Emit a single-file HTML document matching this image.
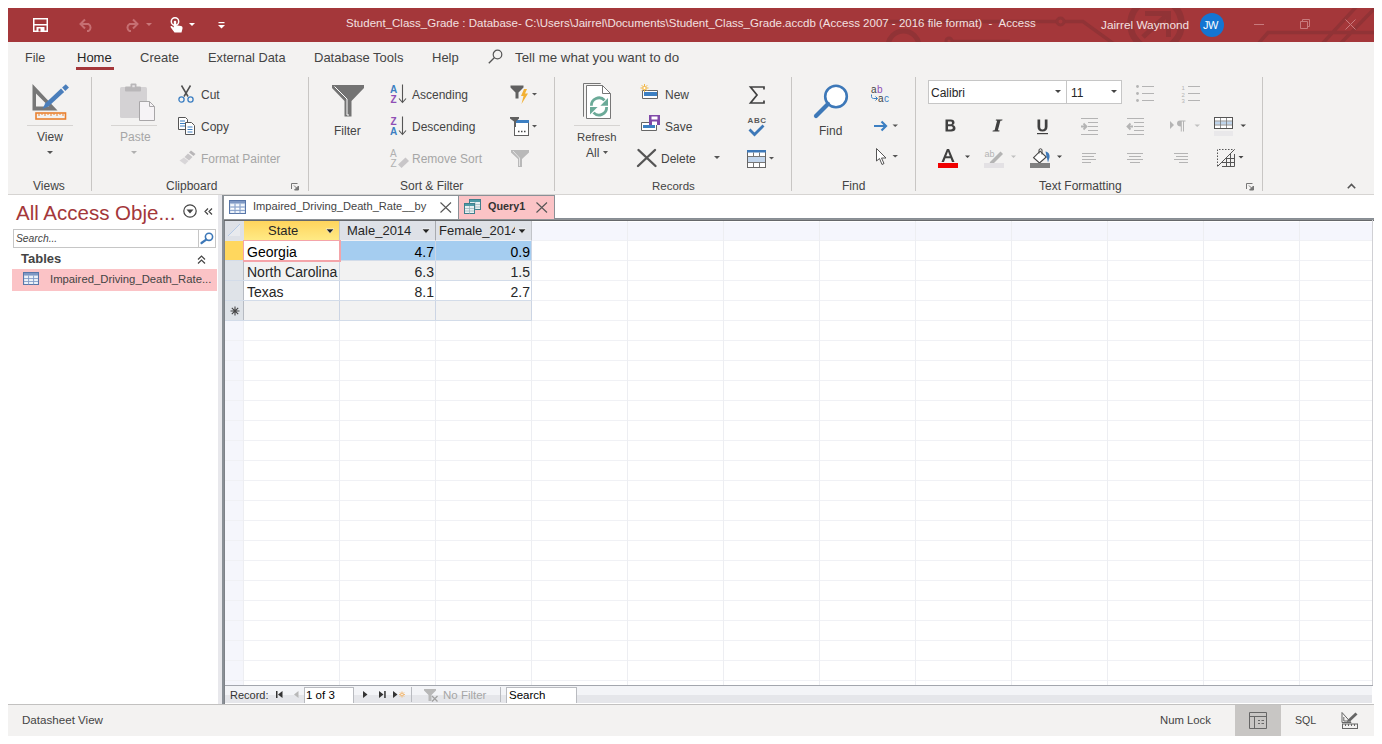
<!DOCTYPE html>
<html><head><meta charset="utf-8">
<style>
html,body{margin:0;padding:0;}
body{width:1382px;height:744px;background:#fff;position:relative;overflow:hidden;font-family:"Liberation Sans",sans-serif;color:#444;}
.a{position:absolute;white-space:nowrap;line-height:1;}
.t{position:absolute;white-space:nowrap;line-height:1;font-size:12px;color:#444;}
svg{position:absolute;overflow:visible;}
#title{left:8px;top:8px;width:1366px;height:34px;background:#A4373A;}
#tabs{left:8px;top:42px;width:1366px;height:30px;background:#F3F2F1;}
#ribbon{left:8px;top:72px;width:1366px;height:122px;background:#F3F2F1;border-bottom:1px solid #D6D4D2;}
.sep{position:absolute;width:1px;background:#C8C6C4;top:77px;height:114px;}
.gl{position:absolute;top:180px;font-size:12px;color:#444;white-space:nowrap;line-height:1;}
#nav{left:8px;top:195px;width:210px;height:509px;background:#fff;}
#split{left:218px;top:195px;width:4px;height:509px;background:#E8E8EC;}
#status{left:8px;top:704px;width:1366px;height:32px;background:#F3F2F1;border-top:1px solid #C2C1C0;box-sizing:border-box;}
.dis{color:#A6A6A6;}
</style></head>
<body>
<!-- TITLE BAR -->
<div id="title" class="a"></div>
<svg style="left:8px;top:8px;overflow:hidden" width="1366" height="34" viewBox="8 8 1366 34">
 <g fill="none" stroke="#913336" stroke-width="3.5">
  <path d="M884 21.5H1057M1064 21.5H1083L1114 44"/>
  <circle cx="1060.5" cy="21.5" r="3.5" stroke-width="3"/>
  <circle cx="903.5" cy="46.5" r="15.5" stroke-width="5"/>
  <path d="M952 41.5H1010"/>
  <circle cx="949" cy="41" r="3" stroke-width="3"/>
  <circle cx="1156" cy="24" r="25.5" stroke-width="6.5"/>
  <path d="M1143 37L1168 14M1145 13.5H1168.5V37" stroke-width="5"/>
  <path d="M1258 44L1268 32.5H1374M1322 44L1357 6M1340 44L1376 7"/>
 </g>
</svg>
<div class="t" style="left:346px;top:18px;font-size:11.5px;color:#F3E0E0;">Student_Class_Grade : Database- C:\Users\Jairrel\Documents\Student_Class_Grade.accdb (Access 2007 - 2016 file format)&nbsp; - &nbsp;Access</div>
<div class="t" style="left:1101px;top:20px;font-size:11.8px;color:#F3E0E0;">Jairrel Waymond</div>
<div class="a" style="left:1200px;top:13px;width:24px;height:24px;border-radius:50%;background:#1475D2;"></div>
<div class="t" style="left:1203px;top:20px;font-size:11px;color:#fff;letter-spacing:-0.5px;">JW</div>

<!-- TABS ROW -->
<div id="tabs" class="a"></div>
<div class="t" style="left:25px;top:52px;font-size:12.5px;">File</div>
<div class="t" style="left:77px;top:51px;font-size:13px;color:#262626;">Home</div>
<div class="a" style="left:76px;top:67px;width:38px;height:3px;background:#A4373A;"></div>
<div class="t" style="left:140px;top:51px;font-size:13px;">Create</div>
<div class="t" style="left:208px;top:51.5px;font-size:12.8px;">External Data</div>
<div class="t" style="left:314px;top:51px;font-size:13px;">Database Tools</div>
<div class="t" style="left:432px;top:51px;font-size:13px;">Help</div>
<div class="t" style="left:515px;top:51px;font-size:13.3px;">Tell me what you want to do</div>

<!-- RIBBON -->
<div id="ribbon" class="a"></div>
<div class="sep" style="left:91px"></div>
<div class="sep" style="left:308px"></div>
<div class="sep" style="left:554px"></div>
<div class="sep" style="left:791px"></div>
<div class="sep" style="left:915px"></div>
<div class="sep" style="left:1262px"></div>

<div class="t" style="left:37px;top:131px;">View</div>
<div class="gl" style="left:33px;">Views</div>
<div class="t dis" style="left:120px;top:131px;">Paste</div>
<div class="t" style="left:201px;top:89px;">Cut</div>
<div class="t" style="left:201px;top:121px;">Copy</div>
<div class="t dis" style="left:201px;top:153px;">Format Painter</div>
<div class="gl" style="left:166px;">Clipboard</div>
<div class="t" style="left:334px;top:125px;">Filter</div>
<div class="t" style="left:412px;top:89px;">Ascending</div>
<div class="t" style="left:412px;top:121px;">Descending</div>
<div class="t dis" style="left:412px;top:153px;">Remove Sort</div>
<div class="gl" style="left:400px;">Sort &amp; Filter</div>
<div class="t" style="left:577px;top:131.5px;font-size:11.3px;">Refresh</div>
<div class="t" style="left:586px;top:147px;">All</div>
<div class="t" style="left:665px;top:89px;">New</div>
<div class="t" style="left:665px;top:121px;">Save</div>
<div class="t" style="left:661px;top:153px;">Delete</div>
<div class="gl" style="left:652px;font-size:11.5px;top:180.5px;">Records</div>
<div class="t" style="left:819px;top:125px;">Find</div>
<div class="gl" style="left:842px;">Find</div>
<div class="gl" style="left:1039px;">Text Formatting</div>

<!-- font combos -->
<div class="a" style="left:928px;top:80px;width:139px;height:24px;background:#fff;border:1px solid #C6C6C6;box-sizing:border-box;"></div>
<div class="a" style="left:1066px;top:80px;width:56px;height:24px;background:#fff;border:1px solid #C6C6C6;box-sizing:border-box;"></div>
<div class="t" style="left:931px;top:87px;color:#262626;">Calibri</div>
<div class="t" style="left:1071px;top:87px;color:#262626;">11</div>


<!-- TITLE ICONS -->
<svg style="left:33px;top:18px" width="15" height="14" viewBox="0 0 15 14">
 <path d="M0.75 0.75H14.25V13.25H0.75Z" fill="none" stroke="#fff" stroke-width="1.5"/>
 <rect x="1" y="6" width="13" height="1.5" fill="#fff"/>
 <rect x="3.5" y="9" width="8" height="4.5" fill="#fff"/>
 <rect x="5.5" y="10.5" width="2" height="3" fill="#A4373A"/>
</svg>
<svg style="left:79px;top:18px" width="16" height="14" viewBox="0 0 16 14">
 <path d="M2 6H9.5A4 4 0 0 1 9.5 13H8" fill="none" stroke="#C66F72" stroke-width="2"/>
 <path d="M6 1.5L1.5 6L6 10.5" fill="none" stroke="#C66F72" stroke-width="2"/>
</svg>
<svg style="left:123px;top:18px" width="16" height="14" viewBox="0 0 16 14">
 <path d="M14 6H6.5A4 4 0 0 0 6.5 13H8" fill="none" stroke="#C66F72" stroke-width="2"/>
 <path d="M10 1.5L14.5 6L10 10.5" fill="none" stroke="#C66F72" stroke-width="2"/>
</svg>
<svg style="left:146px;top:23px" width="6" height="3" viewBox="0 0 6 3"><path d="M0 0H6L3 3Z" fill="#C9787A"/></svg>
<svg style="left:170px;top:17px" width="13" height="16" viewBox="0 0 13 16">
 <circle cx="5" cy="4.5" r="3.7" fill="none" stroke="#fff" stroke-width="1.5"/>
 <path d="M3.8 4.5V10.5L2 9.2C1 8.6 0 9.4 0.8 10.4L4.5 15.5H11.5L12.5 11.5C12.8 10 12 9.2 11 9L6.2 8.2V4.5C6.2 3.5 3.8 3.5 3.8 4.5Z" fill="#fff"/>
</svg>
<svg style="left:189px;top:23px" width="6" height="3" viewBox="0 0 6 3"><path d="M0 0H6L3 3Z" fill="#fff"/></svg>
<svg style="left:218px;top:22px" width="7" height="7" viewBox="0 0 7 7"><rect x="0.5" y="0" width="6" height="1.2" fill="#fff"/><path d="M0 3H7L3.5 6.5Z" fill="#fff"/></svg>
<!-- window controls -->
<svg style="left:1254px;top:24px" width="10" height="1" viewBox="0 0 10 1"><rect width="10" height="1" fill="#C87A7D"/></svg>
<svg style="left:1300px;top:19px" width="10" height="10" viewBox="0 0 10 10"><path d="M0.5 2.5H7.5V9.5H0.5Z M2.5 2.5V0.5H9.5V7.5H7.5" fill="none" stroke="#C87A7D" stroke-width="1"/></svg>
<svg style="left:1345px;top:19px" width="11" height="11" viewBox="0 0 11 11"><path d="M0.5 0.5L10.5 10.5M10.5 0.5L0.5 10.5" stroke="#C87A7D" stroke-width="1"/></svg>
<!-- tell me magnifier -->
<svg style="left:488px;top:49px" width="15" height="15" viewBox="0 0 15 15"><circle cx="9.5" cy="5.5" r="4.3" fill="none" stroke="#555" stroke-width="1.2"/><path d="M6.5 8.5L0.8 14.2" stroke="#555" stroke-width="1.3"/></svg>

<!-- VIEW -->
<svg style="left:32px;top:82px" width="36" height="38" viewBox="0 0 36 38">
 <path d="M0.5 2V28.5H25.5Z M4 11.5V24.5H17Z" fill="#777" fill-rule="evenodd"/>
 <g transform="translate(10.5 27) rotate(-43)" fill="#4A7EBB"><path d="M0 0L6 -2.3H27.5V2.3H6Z"/><path d="M29 -2.3H34V2.3H29Z"/></g>
 <rect x="4" y="31" width="29.5" height="6" fill="none" stroke="#E9802F" stroke-width="1.6"/>
 <path d="M7 31.5V34M10 31.5V33M13 31.5V34M16 31.5V33M19 31.5V34M22 31.5V33M25 31.5V34M28 31.5V33M31 31.5V34" stroke="#E9802F" stroke-width="1"/>
</svg>
<div class="a" style="left:27px;top:125px;width:46px;height:1px;background:#D6D4D2;"></div>
<svg style="left:47px;top:151px" width="6" height="3" viewBox="0 0 6 3"><path d="M0 0H6L3 3Z" fill="#555"/></svg>
<!-- PASTE -->
<svg style="left:120px;top:83px" width="36" height="39" viewBox="0 0 36 39">
 <rect x="0" y="4" width="27" height="31" rx="1.5" fill="#D4D2D4"/>
 <rect x="5" y="3.5" width="16" height="5" rx="1" fill="#B9B7B9"/>
 <rect x="10.5" y="0.5" width="6" height="5" rx="1" fill="#B9B7B9"/>
 <rect x="12.3" y="2.2" width="2.5" height="2" fill="#E6E4E6"/>
 <path d="M19.5 18.5H29.5L34.5 23.5V37.5H19.5Z" fill="#F6F3F6" stroke="#A8A6A8" stroke-width="1"/>
 <path d="M29.5 18.5V23.5H34.5" fill="none" stroke="#A8A6A8" stroke-width="1"/>
</svg>
<div class="a" style="left:111px;top:125px;width:46px;height:1px;background:#D6D4D2;"></div>
<svg style="left:131px;top:151px" width="6" height="3" viewBox="0 0 6 3"><path d="M0 0H6L3 3Z" fill="#B0B0B0"/></svg>
<!-- CUT -->
<svg style="left:178px;top:85px" width="16" height="18" viewBox="0 0 16 18">
 <path d="M3.5 0.5L10 11.5M12.5 0.5L6 11.5" stroke="#505050" stroke-width="1.5"/>
 <circle cx="3.5" cy="14.5" r="2.6" fill="none" stroke="#3C7FC2" stroke-width="1.3"/>
 <circle cx="12.5" cy="14.5" r="2.6" fill="none" stroke="#3C7FC2" stroke-width="1.3"/>
</svg>
<!-- COPY -->
<svg style="left:178px;top:117px" width="17" height="18" viewBox="0 0 17 18">
 <path d="M0.5 0.5H7.5L9.5 2.5V12.5H0.5Z" fill="#fff" stroke="#555" stroke-width="1"/>
 <path d="M2 4H7M2 6.5H7M2 9H7" stroke="#3C7FC2" stroke-width="1"/>
 <path d="M7.5 5.5H13.5L16.5 8.5V17.5H7.5Z" fill="#fff" stroke="#555" stroke-width="1"/>
 <path d="M9.5 10H14.5M9.5 12.5H14.5M9.5 15H14.5" stroke="#3C7FC2" stroke-width="1"/>
</svg>
<!-- FORMAT PAINTER -->
<svg style="left:179px;top:150px" width="17" height="15" viewBox="0 0 17 15">
 <path d="M12 0.5L16.5 4L14.5 6L10 2.5Z" fill="#B8B6B8"/>
 <path d="M9 3.5L13.5 7L10 10.5L5.5 7Z" fill="#C8C6C8"/>
 <path d="M5 7.5L9.5 11L6 14.5L0.5 10.5Z" fill="#D8D6D8"/>
</svg>
<svg style="left:291px;top:183px" width="8" height="7" viewBox="0 0 8 7"><path d="M0.5 6V0.5H6.5" fill="none" stroke="#777" stroke-width="1"/><path d="M3 2.5L7 6.5M7.5 3V7H3.5Z" stroke="#777" fill="#777" stroke-width="1"/></svg>

<!-- FILTER -->
<svg style="left:332px;top:85px" width="33" height="32" viewBox="0 0 33 32">
 <path d="M0 0H32V3L19.5 16V31.5H12.5V16L0 3Z" fill="#737373"/>
 <path d="M2.5 1.5L15 14V30H17" fill="none" stroke="#fff" stroke-width="1"/>
</svg>
<!-- sort icons -->
<svg style="left:390px;top:84px" width="18" height="20" viewBox="0 0 18 20">
 <text x="0" y="9" font-family="Liberation Sans" font-size="10" font-weight="bold" fill="#3C7FC2">A</text>
 <text x="0.5" y="19" font-family="Liberation Sans" font-size="10" font-weight="bold" fill="#8F4FB5">Z</text>
 <path d="M12.5 0.5V18M9 14.5L12.5 18.5L16 14.5" fill="none" stroke="#555" stroke-width="1.1"/>
</svg>
<svg style="left:390px;top:116px" width="18" height="20" viewBox="0 0 18 20">
 <text x="0.5" y="9" font-family="Liberation Sans" font-size="10" font-weight="bold" fill="#8F4FB5">Z</text>
 <text x="0" y="19" font-family="Liberation Sans" font-size="10" font-weight="bold" fill="#3C7FC2">A</text>
 <path d="M12.5 0.5V18M9 14.5L12.5 18.5L16 14.5" fill="none" stroke="#555" stroke-width="1.1"/>
</svg>
<svg style="left:390px;top:148px" width="20" height="20" viewBox="0 0 20 20">
 <text x="0" y="9" font-family="Liberation Sans" font-size="10" fill="#B0B0B0">A</text>
 <text x="0.5" y="19" font-family="Liberation Sans" font-size="10" fill="#B0B0B0">Z</text>
 <path d="M8 16.5L15.5 9.5L19 13L11.5 20Z" fill="#C8C6C8"/>
</svg>
<!-- filter lightning -->
<svg style="left:510px;top:85px" width="28" height="20" viewBox="0 0 28 20">
 <path d="M0.5 0.5H13.5V2.5L8.5 7.5V13.5H5.5V7.5L0.5 2.5Z" fill="#606060"/>
 <path d="M14 4H17L15 8.5H18L11.5 19L13.5 11H11Z" fill="#F2B134"/>
 <path d="M22 8H27L24.5 10.5Z" fill="#555"/>
</svg>
<svg style="left:510px;top:117px" width="28" height="19" viewBox="0 0 28 19">
 <rect x="4.5" y="3.5" width="14" height="15" fill="#fff" stroke="#606060" stroke-width="1"/>
 <rect x="5" y="3" width="14" height="3" fill="#3C7FC2"/>
 <path d="M0 0H9V1.5L6 4.5V10H4V4.5L0 1.5Z" fill="#606060"/>
 <path d="M8 14.5H9.5M11 14.5H12.5M14 14.5H15.5" stroke="#444" stroke-width="1.3"/>
 <path d="M22 8H27L24.5 10.5Z" fill="#555"/>
</svg>
<svg style="left:511px;top:150px" width="19" height="17" viewBox="0 0 19 17">
 <path d="M0 0H18V2.5L11 9V17H7V9L0 2.5Z" fill="#B9B9B9"/>
 <path d="M2 1L8.5 8V16" fill="none" stroke="#E8E8E8" stroke-width="0.9"/>
</svg>

<!-- REFRESH -->
<svg style="left:582px;top:83px" width="30" height="37" viewBox="0 0 30 37">
 <path d="M1.5 33.7V0.5H18.7" fill="none" stroke="#777" stroke-width="1"/>
 <path d="M4.5 2.5H20.5L28.5 10.5V35.5H4.5Z" fill="#fff" stroke="#777" stroke-width="1"/>
 <path d="M20.5 2.5V10.5H28.5" fill="none" stroke="#777" stroke-width="1"/>
 <path d="M9.4 22.8A7.6 7.6 0 0 1 22.5 17.2" fill="none" stroke="#6BAA98" stroke-width="2.8"/>
 <path d="M26 14.9V22.8H18.4Z" fill="#6BAA98"/>
 <path d="M24.6 24A7.6 7.6 0 0 1 11.5 29.6" fill="none" stroke="#6BAA98" stroke-width="2.8"/>
 <path d="M8 24H15.6L8 31.4Z" fill="#6BAA98"/>
</svg>
<div class="a" style="left:574px;top:125px;width:46px;height:1px;background:#D6D4D2;"></div>
<svg style="left:603px;top:151px" width="5" height="3" viewBox="0 0 5 3"><path d="M0 0H5L2.5 3Z" fill="#555"/></svg>
<!-- New/Save/Delete -->
<svg style="left:640px;top:84px" width="19" height="16" viewBox="0 0 19 16">
 <path d="M2.5 6.5H17.5V14.5H2.5Z" fill="#fff" stroke="#666" stroke-width="1"/>
 <rect x="4" y="8" width="13" height="4" fill="#3C7FC2"/>
 <path d="M4.5 0V8M0.5 4H8.5M1.7 1.2L7.3 6.8M7.3 1.2L1.7 6.8" stroke="#F2B134" stroke-width="0.9"/><circle cx="4.5" cy="4" r="1.6" fill="#fff" stroke="#F2B134" stroke-width="0.8"/>
</svg>
<svg style="left:641px;top:115px" width="20" height="16" viewBox="0 0 20 16">
 <path d="M0.5 7.5H15.5V15.5H0.5Z" fill="#fff" stroke="#666" stroke-width="1"/>
 <rect x="2" y="10" width="12" height="3" fill="#3C7FC2"/>
 <rect x="8" y="0" width="11" height="10" fill="#8049A8"/>
 <rect x="10.5" y="1.5" width="6" height="3" fill="#fff"/>
 <rect x="11" y="6.5" width="5" height="3.5" fill="#fff"/>
</svg>
<svg style="left:637px;top:149px" width="20" height="18" viewBox="0 0 20 18">
 <path d="M1.5 1L18.5 17M18 1L1 17" stroke="#555" stroke-width="2.4" stroke-linecap="round"/>
</svg>
<svg style="left:714px;top:156px" width="6" height="3" viewBox="0 0 6 3"><path d="M0 0H6L3 3Z" fill="#555"/></svg>
<!-- totals / spelling / more -->
<svg style="left:749px;top:86px" width="16" height="18" viewBox="0 0 16 18">
 <path d="M15 3.5V1H1.5L8 9L1.5 17H15V14.5" fill="none" stroke="#404040" stroke-width="1.7"/>
</svg>
<svg style="left:747px;top:116px" width="20" height="21" viewBox="0 0 20 21">
 <text x="0.5" y="7" font-family="Liberation Sans" font-size="8" font-weight="bold" fill="#5A5A5A" letter-spacing="0.6">ABC</text>
 <path d="M2.5 13.5L7.5 18.5L16.5 9.5" fill="none" stroke="#3D78B8" stroke-width="2.8"/>
</svg>
<svg style="left:747px;top:150px" width="28" height="18" viewBox="0 0 28 18">
 <rect x="0.5" y="0.5" width="18" height="17" fill="#fff" stroke="#666" stroke-width="1"/>
 <rect x="0" y="0" width="19" height="2.5" fill="#3D78B8"/>
 <rect x="1" y="7" width="17" height="5" fill="#C3D6EC"/>
 <path d="M1 6.5H18M1 12.5H18M6.5 2.5V6.5M12.5 2.5V6.5M6.5 12.5V17M12.5 12.5V17" stroke="#777" stroke-width="1"/>
 <path d="M22 7H27L24.5 9.5Z" fill="#555"/>
</svg>

<!-- FIND -->
<svg style="left:813px;top:83px" width="37" height="36" viewBox="0 0 37 36">
 <circle cx="23" cy="13.5" r="10.8" fill="#fff" stroke="#3D78B8" stroke-width="2.6"/>
 <path d="M15 21L3 33" stroke="#3D78B8" stroke-width="4.2" stroke-linecap="round"/>
</svg>
<svg style="left:870px;top:85px" width="23" height="19" viewBox="0 0 23 19">
 <text x="1" y="8" font-family="Liberation Sans" font-size="10" fill="#444">a</text>
 <text x="7" y="8" font-family="Liberation Sans" font-size="10" fill="#8F4FB5">b</text>
 <text x="8" y="17" font-family="Liberation Sans" font-size="10" fill="#444">a</text>
 <text x="14" y="17" font-family="Liberation Sans" font-size="10" fill="#3C7FC2">c</text>
 <path d="M1.5 9.5V11.5C1.5 12.8 2.5 13.5 3.5 13.5H7.5M5.5 11.5L7.5 13.5L5.5 15.5" fill="none" stroke="#3C7FC2" stroke-width="1"/>
</svg>
<svg style="left:873px;top:120px" width="26" height="12" viewBox="0 0 26 12">
 <path d="M1 6H13M8.5 1.5L13 6L8.5 10.5" fill="none" stroke="#3C7FC2" stroke-width="2.2"/>
 <path d="M19.5 4.5H25L22.2 7Z" fill="#555"/>
</svg>
<svg style="left:876px;top:148px" width="23" height="18" viewBox="0 0 23 18">
 <path d="M0.5 0.5V13L3.5 10.5L6 16.5L8 15.5L5.5 10H10Z" fill="#fff" stroke="#555" stroke-width="1"/>
 <path d="M16.5 7H22L19.2 9.5Z" fill="#555"/>
</svg>


<!-- TEXT FORMATTING ICONS -->
<svg style="left:1111px;top:90px" width="6" height="3" viewBox="0 0 6 3"><path d="M0 0H6L3 3Z" fill="#444"/></svg>
<svg style="left:1055px;top:90px" width="6" height="3" viewBox="0 0 6 3"><path d="M0 0H6L3 3Z" fill="#444"/></svg>
<svg style="left:1135px;top:84px" width="21" height="18" viewBox="0 0 21 18">
 <circle cx="2.5" cy="2.5" r="1.4" fill="#B4B4B4"/><circle cx="2.5" cy="9.5" r="1.4" fill="#B4B4B4"/><circle cx="2.5" cy="16.5" r="1.4" fill="#B4B4B4"/>
 <path d="M7 2.5H19M7 9.5H19M7 16.5H19" stroke="#B4B4B4" stroke-width="1"/>
</svg>
<svg style="left:1181px;top:84px" width="21" height="19" viewBox="0 0 21 19">
 <text x="0.5" y="6" font-family="Liberation Sans" font-size="6" fill="#B4B4B4">1</text>
 <text x="0.5" y="12.5" font-family="Liberation Sans" font-size="6" fill="#B4B4B4">2</text>
 <text x="0.5" y="19" font-family="Liberation Sans" font-size="6" fill="#B4B4B4">3</text>
 <path d="M7 2.5H19M7 9.5H19M7 16.5H19" stroke="#B4B4B4" stroke-width="1"/>
</svg>
<svg style="left:945px;top:119px" width="11" height="13" viewBox="0 0 11 13">
 <path d="M0.5 0.5H5.8C8.3 0.5 9.5 1.8 9.5 3.4C9.5 4.8 8.6 5.8 7.4 6.1C9.2 6.3 10.5 7.5 10.5 9.2C10.5 11.3 8.9 12.5 6.2 12.5H0.5Z M3 2.5V5.3H5.3C6.5 5.3 7 4.7 7 3.9C7 3 6.4 2.5 5.3 2.5Z M3 7.2V10.5H5.7C7.1 10.5 7.8 9.9 7.8 8.8C7.8 7.8 7.1 7.2 5.7 7.2Z" fill="#404040" fill-rule="evenodd"/>
</svg>
<svg style="left:992px;top:119px" width="11" height="13" viewBox="0 0 11 13">
 <path d="M4 0.5H10.5L10.2 1.5L8.4 1.8L5.9 11.2L7.6 11.5L7.3 12.5H0.5L0.8 11.5L2.6 11.2L5.1 1.8L3.7 1.5Z" fill="#404040"/>
</svg>
<svg style="left:1037px;top:119px" width="11" height="16" viewBox="0 0 11 16">
 <path d="M0.5 0.5H3.2V7.8C3.2 9.6 3.9 10.4 5.5 10.4C7.1 10.4 7.8 9.6 7.8 7.8V0.5H10.5V7.8C10.5 11 8.8 12.6 5.5 12.6C2.2 12.6 0.5 11 0.5 7.8Z" fill="#404040"/>
 <rect x="0" y="14" width="11" height="1.2" fill="#404040"/>
</svg>
<svg style="left:1080px;top:118px" width="19" height="17" viewBox="0 0 19 17">
 <path d="M1 0.5H18M8 4.5H18M8 8.5H18M8 12.5H18M1 16.5H18" stroke="#B4B4B4" stroke-width="1"/>
 <path d="M1 8.5H6M3.5 5.5L6.5 8.5L3.5 11.5" fill="none" stroke="#B4B4B4" stroke-width="1.8"/>
</svg>
<svg style="left:1126px;top:118px" width="19" height="17" viewBox="0 0 19 17">
 <path d="M1 0.5H18M8 4.5H18M8 8.5H18M8 12.5H18M1 16.5H18" stroke="#B4B4B4" stroke-width="1"/>
 <path d="M7 8.5H1.5M4.5 5.5L1.5 8.5L4.5 11.5" fill="none" stroke="#B4B4B4" stroke-width="1.8"/>
</svg>
<svg style="left:1170px;top:120px" width="31" height="12" viewBox="0 0 31 12">
 <path d="M0 1V9L4 5Z" fill="#B4B4B4"/>
 <path d="M8.5 0.5H15.5V1.5H14V11.5H13V1.5H11.8V11.5H10.8V6.5C8.5 6.5 7 5.3 7 3.5C7 1.8 8 0.5 10 0.5Z" fill="#B4B4B4"/>
 <path d="M24.5 4.5H30L27.2 7Z" fill="#C0C0C0"/>
</svg>
<svg style="left:1214px;top:117px" width="34" height="19" viewBox="0 0 34 19">
 <rect x="0.5" y="0.5" width="18" height="11" fill="#fff" stroke="#555" stroke-width="1"/>
 <rect x="1" y="4.5" width="17" height="3" fill="#BFD5EC"/>
 <path d="M1 4H18M1 8H18M6.5 1V11M12.5 1V11" stroke="#777" stroke-width="0.8"/>
 <rect x="0" y="14" width="19" height="5" fill="#E9E8EA"/>
 <path d="M26.5 7.5H32L29.2 10Z" fill="#444"/>
</svg>
<svg style="left:937px;top:148px" width="35" height="20" viewBox="0 0 35 20">
 <path d="M4.5 14L9.9 1H12.1L17.5 14H15L13.6 10.3H8.4L7 14Z M9.2 8.2H12.8L11 3.5Z" fill="#404040" fill-rule="evenodd"/>
 <rect x="1" y="15" width="20" height="5" fill="#F00000"/>
 <path d="M28 7.5H33L30.5 10Z" fill="#444"/>
</svg>
<svg style="left:984px;top:148px" width="34" height="20" viewBox="0 0 34 20">
 <text x="0.5" y="8.5" font-family="Liberation Sans" font-size="9" fill="#B4B4B4">ab</text>
 <path d="M6 14L16.5 3.5L19 6L8.5 16.5L5 17Z" fill="#B4B4B4"/>
 <rect x="0" y="15" width="20" height="5" fill="#E3E1E4"/>
 <path d="M27 7.5H32L29.5 10Z" fill="#C0C0C0"/>
</svg>
<svg style="left:1030px;top:148px" width="34" height="20" viewBox="0 0 34 20">
 <path d="M3.6 9.7L10.1 3.2L16.3 9L9.5 15Z" fill="#fff" stroke="#444" stroke-width="1.1"/>
 <path d="M9 5.5V2C9 0.3 12 0.3 12 2V6.5" fill="none" stroke="#444" stroke-width="1"/>
 <path d="M15.5 3.5C18.5 4 20 6.5 19.5 9.5L18 14.5C17.5 12 17 10 16.5 8.5Z" fill="#3D78B8"/>
 <rect x="0" y="15" width="20" height="5" fill="#808080"/>
 <path d="M27 7.5H32L29.5 10Z" fill="#444"/>
</svg>
<svg style="left:1082px;top:153px" width="15" height="11" viewBox="0 0 15 11">
 <path d="M0 0.5H14M0 3.5H12M0 6.5H14M0 9.5H9" stroke="#B4B4B4" stroke-width="1"/>
</svg>
<svg style="left:1127px;top:153px" width="16" height="11" viewBox="0 0 16 11">
 <path d="M0 0.5H16M2 3.5H14M0 6.5H16M3 9.5H13" stroke="#B4B4B4" stroke-width="1"/>
</svg>
<svg style="left:1174px;top:153px" width="15" height="11" viewBox="0 0 15 11">
 <path d="M0 0.5H14M2 3.5H14M0 6.5H14M5 9.5H14" stroke="#B4B4B4" stroke-width="1"/>
</svg>
<svg style="left:1217px;top:149px" width="28" height="18" viewBox="0 0 28 18">
 <path d="M0.5 17V0.5H17.5" fill="none" stroke="#555" stroke-width="1" stroke-dasharray="1.5 1.5"/>
 <path d="M0.5 17.5L17.5 0.5" stroke="#555" stroke-width="1"/>
 <path d="M5 17.5H17.5V5M9.5 17.5V9M13.5 17.5V5M5 13.5H17.5M9 9.5H17.5" fill="none" stroke="#555" stroke-width="1"/>
 <path d="M21.5 7H26.5L24 9.5Z" fill="#444"/>
</svg>
<svg style="left:1246px;top:183px" width="8" height="7" viewBox="0 0 8 7"><path d="M0.5 6V0.5H6.5" fill="none" stroke="#777" stroke-width="1"/><path d="M3 2.5L7 6.5M7.5 3V7H3.5Z" stroke="#777" fill="#777" stroke-width="1"/></svg>
<svg style="left:1347px;top:183px" width="9" height="6" viewBox="0 0 9 6"><path d="M0.8 5.2L4.5 1.5L8.2 5.2" fill="none" stroke="#555" stroke-width="1.6"/></svg>

<!-- NAV PANE -->
<div id="nav" class="a"></div>
<div id="split" class="a"></div>
<div class="t" style="left:16px;top:203px;font-size:20.5px;color:#A4373A;">All Access Obje...</div>
<div class="a" style="left:13px;top:229px;width:203px;height:19px;border:1px solid #C6C6C6;box-sizing:border-box;background:#fff;"></div>
<div class="t" style="left:16px;top:234px;font-size:10.3px;font-style:italic;color:#444;">Search...</div>
<div class="t" style="left:21px;top:252px;font-size:13px;font-weight:bold;color:#444;">Tables</div>
<div class="a" style="left:12px;top:269px;width:205px;height:22px;background:#FBC3C6;"></div>
<div class="t" style="left:50px;top:272px;font-size:11.3px;color:#444;width:166px;height:17px;padding-top:2px;overflow:hidden;">Impaired_Driving_Death_Rate...</div>



<!-- NAV ICONS -->
<svg style="left:183px;top:204px" width="14" height="14" viewBox="0 0 14 14"><circle cx="7" cy="7" r="6.2" fill="none" stroke="#444" stroke-width="1.2"/><path d="M3.5 5.5H10.5L7 9.5Z" fill="#444"/></svg>
<svg style="left:204px;top:208px" width="9" height="7" viewBox="0 0 9 7"><path d="M4 0.5L1 3.5L4 6.5M8 0.5L5 3.5L8 6.5" fill="none" stroke="#444" stroke-width="1.2"/></svg>
<div class="a" style="left:198px;top:230px;width:1px;height:17px;background:#C6C6C6;"></div>
<svg style="left:200px;top:232px" width="14" height="12" viewBox="0 0 14 12"><circle cx="9" cy="4.8" r="3.6" fill="none" stroke="#3D78B8" stroke-width="1.6"/><path d="M6.2 7.6L1.5 11" stroke="#3D78B8" stroke-width="2.2" stroke-linecap="round"/></svg>
<svg style="left:197px;top:255px" width="9" height="9" viewBox="0 0 9 9"><path d="M1 4.5L4.5 1L8 4.5M1 8.5L4.5 5L8 8.5" fill="none" stroke="#444" stroke-width="1.2"/></svg>
<svg style="left:23px;top:272px" width="16" height="13" viewBox="0 0 16 13">
 <rect x="0.5" y="0.5" width="15" height="12" fill="#D9E4F2" stroke="#5876A8" stroke-width="1"/>
 <rect x="1" y="1" width="14" height="2.5" fill="#7E98C4"/>
 <path d="M1 6.5H15M1 9.5H15M5.5 3.5V12.5M10.5 3.5V12.5" stroke="#7E98C4" stroke-width="0.8"/>
 <path d="M2 5H5M6.5 5H10M11.5 5H14.5M2 8H5M6.5 8H10M11.5 8H14.5M2 11H5M6.5 11H10M11.5 11H14.5" stroke="#fff" stroke-width="1"/>
</svg>

<!-- DOCUMENT AREA -->
<div class="a" style="left:222px;top:195px;width:1152px;height:509px;background:#fff;"></div>
<div class="a" style="left:222px;top:195px;width:2px;height:509px;background:#8A9096;"></div>
<div class="a" style="left:224px;top:219px;width:1px;height:485px;background:#7E8288;"></div>
<div class="a" style="left:222px;top:195px;width:333px;height:1px;background:#8A9096;"></div>
<!-- doc tabs -->
<div class="a" style="left:459px;top:196px;width:95px;height:23px;background:#FBC3C6;"></div>
<div class="t" style="left:253px;top:201px;font-size:11.1px;color:#444;">Impaired_Driving_Death_Rate__by</div>
<div class="t" style="left:488px;top:201px;font-size:10.8px;font-weight:bold;color:#333;">Query1</div>
<!-- datasheet frame -->
<div class="a" style="left:224px;top:219px;width:1150px;height:2px;background:linear-gradient(#8E9296 0,#8E9296 1px,#66686B 1px);"></div>
<div class="a" style="left:555px;top:218px;width:819px;height:1px;background:#878D94;"></div>
<div class="a" style="left:1372px;top:220px;width:1px;height:466px;background:#D0D0D4;"></div>
<!-- empty grid -->
<div class="a" style="left:225px;top:221px;width:1147px;height:19px;background:linear-gradient(#fff 0,#fff 1px,#F5F6FD 1px);"></div>
<div class="a" style="left:225px;top:240px;width:19px;height:445px;background:#F5F6FC;"></div>
<div class="a" style="left:225px;top:221px;width:1147px;height:464px;
 background-image:linear-gradient(to right,#EDEEF2 0,#EDEEF2 1px,transparent 1px),linear-gradient(to bottom,#F0F1F5 0,#F0F1F5 1px,transparent 1px);
 background-size:96px 464px,1147px 20px;background-position:18px 0,0 19px;background-repeat:repeat-x,repeat;"></div>
<!-- header -->
<div class="a" style="left:225px;top:221px;width:19px;height:19px;background:#DEE1E7;"></div>
<div class="a" style="left:244px;top:221px;width:95px;height:19px;background:linear-gradient(#FFD45C,#FFEA85);"></div>
<div class="a" style="left:340px;top:221px;width:95px;height:19px;background:#DEE1E7;"></div>
<div class="a" style="left:436px;top:221px;width:95px;height:19px;background:#DEE1E7;"></div>
<div class="a" style="left:339px;top:221px;width:1px;height:19px;background:#C2C4C9;"></div>
<div class="a" style="left:435px;top:221px;width:1px;height:19px;background:#A8AAAF;"></div>
<div class="a" style="left:531px;top:221px;width:1px;height:19px;background:#C2C4C9;"></div>
<div class="t" style="left:268px;top:224px;font-size:13px;color:#262626;">State</div>
<div class="t" style="left:347px;top:224px;font-size:13px;color:#262626;">Male_2014</div>
<div class="t" style="left:439px;top:222px;font-size:13px;color:#262626;width:76px;height:17px;padding-top:2px;overflow:hidden;">Female_2014</div>
<!-- rows -->
<div class="a" style="left:225px;top:240px;width:19px;height:80px;background:#DFE3E8;"></div>
<div class="a" style="left:225px;top:241px;width:19px;height:19px;background:#FFD75E;"></div>
<div class="a" style="left:244px;top:261px;width:288px;height:19px;background:#F2F2F2;"></div>
<div class="a" style="left:244px;top:301px;width:288px;height:19px;background:#F2F2F2;"></div>
<div class="a" style="left:341px;top:241px;width:190px;height:19px;background:#A5CDF0;"></div>
<div class="a" style="left:243px;top:240px;width:1px;height:80px;background:#B7BBC2;"></div>
<div class="a" style="left:339px;top:240px;width:1px;height:80px;background:#CCD5E4;"></div>
<div class="a" style="left:435px;top:240px;width:1px;height:80px;background:#CCD5E4;"></div>
<div class="a" style="left:531px;top:240px;width:1px;height:80px;background:#CCD5E4;"></div>
<div class="a" style="left:225px;top:260px;width:307px;height:1px;background:#D3DCE9;"></div>
<div class="a" style="left:225px;top:280px;width:307px;height:1px;background:#D3DCE9;"></div>
<div class="a" style="left:225px;top:300px;width:307px;height:1px;background:#D3DCE9;"></div>
<div class="a" style="left:225px;top:320px;width:307px;height:1px;background:#D3DCE9;"></div>
<div class="a" style="left:243px;top:240px;width:98px;height:22px;border:solid #F4A4A9;border-width:1px 2px 2px 1px;box-sizing:border-box;background:#fff;"></div>
<div class="t" style="left:247px;top:245px;font-size:14px;color:#000;">Georgia</div>
<div class="t" style="left:247px;top:265px;font-size:14px;color:#262626;">North Carolina</div>
<div class="t" style="left:247px;top:285px;font-size:14px;color:#262626;">Texas</div>
<div class="t" style="left:412px;top:245px;font-size:14px;color:#000;width:22px;text-align:right;">4.7</div>
<div class="t" style="left:508px;top:245px;font-size:14px;color:#000;width:22px;text-align:right;">0.9</div>
<div class="t" style="left:412px;top:265px;font-size:14px;color:#262626;width:22px;text-align:right;">6.3</div>
<div class="t" style="left:508px;top:265px;font-size:14px;color:#262626;width:22px;text-align:right;">1.5</div>
<div class="t" style="left:412px;top:285px;font-size:14px;color:#262626;width:22px;text-align:right;">8.1</div>
<div class="t" style="left:508px;top:285px;font-size:14px;color:#262626;width:22px;text-align:right;">2.7</div>
<!-- record nav -->
<div class="a" style="left:225px;top:685px;width:1148px;height:1px;background:#A3A6AD;"></div>
<div class="a" style="left:225px;top:686px;width:1147px;height:17px;background:linear-gradient(#F3F4F7 0,#F3F4F7 9px,#E5E6EA 9px);"></div>
<div class="t" style="left:230px;top:690px;font-size:11px;color:#333;">Record:</div>
<div class="a" style="left:304px;top:687px;width:50px;height:16px;background:#fff;border:1px solid #B9BBC0;border-bottom:none;box-sizing:border-box;"></div>
<div class="t" style="left:306px;top:690px;font-size:11.5px;color:#000;">1 of 3</div>
<div class="t" style="left:443px;top:690px;font-size:11.5px;color:#A6A6A6;">No Filter</div>
<div class="a" style="left:506px;top:687px;width:71px;height:16px;background:#fff;border:1px solid #B9BBC0;border-bottom:none;box-sizing:border-box;"></div>
<div class="t" style="left:509px;top:690px;font-size:11.5px;color:#000;">Search</div>


<!-- DOC TAB ICONS -->
<div class="a" style="left:458px;top:195px;width:1px;height:24px;background:#8A9096;"></div>
<div class="a" style="left:554px;top:195px;width:1px;height:24px;background:#8A9096;"></div>
<svg style="left:229px;top:200px" width="17" height="14" viewBox="0 0 17 14">
 <rect x="0.5" y="0.5" width="16" height="13" fill="#D9E4F2" stroke="#5876A8" stroke-width="1"/>
 <rect x="1" y="1" width="15" height="2.5" fill="#7E98C4"/>
 <path d="M1 7H16M1 10.5H16M6 3.5V13.5M11 3.5V13.5" stroke="#7E98C4" stroke-width="0.8"/>
 <path d="M2 5.2H5M7 5.2H10M12 5.2H15M2 8.7H5M7 8.7H10M12 8.7H15M2 12H5M7 12H10M12 12H15" stroke="#fff" stroke-width="1.2"/>
</svg>
<svg style="left:440px;top:202px" width="12" height="11" viewBox="0 0 12 11"><path d="M0.5 0.5L11 10.5M11 0.5L0.5 10.5" stroke="#555" stroke-width="1.1"/></svg>
<svg style="left:464px;top:199px" width="17" height="15" viewBox="0 0 17 15">
 <rect x="5.5" y="0.5" width="11" height="10" fill="#E9F0F2" stroke="#3F7F8C" stroke-width="1"/>
 <rect x="6" y="1" width="10" height="2" fill="#4E9AA6"/>
 <path d="M6 5.5H16M6 8H16M11 3V10.5" stroke="#9FB8BE" stroke-width="0.8"/>
 <rect x="0.5" y="4.5" width="10" height="10" fill="#E9F0F2" stroke="#3F7F8C" stroke-width="1"/>
 <rect x="1" y="5" width="9" height="2" fill="#4E9AA6"/>
 <path d="M1 9.5H10M1 12H10M5.5 7V14.5" stroke="#9FB8BE" stroke-width="0.8"/>
</svg>
<svg style="left:536px;top:202px" width="12" height="11" viewBox="0 0 12 11"><path d="M0.5 0.5L11 10.5M11 0.5L0.5 10.5" stroke="#555" stroke-width="1.1"/></svg>
<!-- header arrows -->
<svg style="left:326px;top:229px" width="8" height="5" viewBox="0 0 8 5"><path d="M0 0H8L4 4.5Z" fill="#222" stroke="#fff" stroke-width="0.6"/></svg>
<svg style="left:422px;top:229px" width="8" height="5" viewBox="0 0 8 5"><path d="M0 0H8L4 4.5Z" fill="#222" stroke="#fff" stroke-width="0.6"/></svg>
<svg style="left:518px;top:229px" width="8" height="5" viewBox="0 0 8 5"><path d="M0 0H8L4 4.5Z" fill="#222" stroke="#fff" stroke-width="0.6"/></svg>
<!-- corner triangle -->
<svg style="left:227px;top:223px" width="14" height="14" viewBox="0 0 14 14"><path d="M13 1V13H1Z" fill="#E8EAEE"/><path d="M13 1L1 13" stroke="#A9C3E6" stroke-width="0.8"/></svg>
<!-- asterisk -->
<svg style="left:230px;top:306px" width="10" height="10" viewBox="0 0 10 10"><path d="M5 0.5V9.5M0.5 5H9.5M1.8 1.8L8.2 8.2M8.2 1.8L1.8 8.2" stroke="#444" stroke-width="1.1"/></svg>
<!-- record nav icons -->
<svg style="left:276px;top:691px" width="7" height="7" viewBox="0 0 7 7"><rect x="0" y="0" width="1.5" height="7" fill="#333"/><path d="M6.5 0V7L2 3.5Z" fill="#333"/></svg>
<svg style="left:294px;top:691px" width="5" height="7" viewBox="0 0 5 7"><path d="M4.5 0V7L0 3.5Z" fill="#B8B8B8"/></svg>
<svg style="left:363px;top:691px" width="5" height="7" viewBox="0 0 5 7"><path d="M0 0V7L4.5 3.5Z" fill="#333"/></svg>
<svg style="left:379px;top:691px" width="7" height="7" viewBox="0 0 7 7"><path d="M0 0V7L4.5 3.5Z" fill="#333"/><rect x="5.2" y="0" width="1.5" height="7" fill="#333"/></svg>
<svg style="left:393px;top:690px" width="13" height="9" viewBox="0 0 13 9"><path d="M0 1V8L4.5 4.5Z" fill="#333"/><path d="M9 1.5V7.5M6 4.5H12M6.9 2.4L11.1 6.6M11.1 2.4L6.9 6.6" stroke="#F2B56B" stroke-width="0.9"/><circle cx="9" cy="4.5" r="1.3" fill="#F3F4F7" stroke="#F2B56B" stroke-width="0.8"/></svg>
<div class="a" style="left:411px;top:687px;width:1px;height:15px;background:#B9BBC0;"></div>
<svg style="left:424px;top:689px" width="16" height="13" viewBox="0 0 16 13"><path d="M0 0H12V1.5L7.5 6V12H4.5V6L0 1.5Z" fill="#B8B8B8"/><path d="M8 7L13.5 12.5M13.5 7L8 12.5" stroke="#A0A0A0" stroke-width="1.3"/></svg>
<div class="a" style="left:500px;top:687px;width:1px;height:15px;background:#B9BBC0;"></div>
<!-- STATUS BAR -->
<div id="status" class="a"></div>
<div class="t" style="left:22px;top:714px;font-size:11.6px;">Datasheet View</div>
<div class="t" style="left:1160px;top:715px;font-size:11.3px;">Num Lock</div>
<div class="a" style="left:1235px;top:705px;width:46px;height:31px;background:#C8C6C4;"></div>
<div class="t" style="left:1295px;top:715px;font-size:10.6px;">SQL</div>

<!-- status bar icons -->
<svg style="left:1249px;top:712px" width="18" height="17" viewBox="0 0 18 17"><path d="M0.5 0.5H17.5V16.5H0.5Z M0.5 4.5H17.5M5.5 4.5V16.5" fill="none" stroke="#666" stroke-width="1"/><path d="M9 8.5H11M12.5 8.5H15M9 11.5H11M12.5 11.5H15" stroke="#666" stroke-width="1"/></svg>
<svg style="left:1341px;top:712px" width="18" height="17" viewBox="0 0 18 17">
 <path d="M1 0.5V10.5H10Z M2.8 5V9H7" fill="none" stroke="#666" stroke-width="1"/>
 <path d="M6 10L7 7.5L14.5 0.5L16.5 2.5L9 9.5Z" fill="#666"/>
 <rect x="1.5" y="12" width="15" height="4.5" fill="none" stroke="#666" stroke-width="1"/>
 <path d="M4.5 12V14M7.5 12V14M10.5 12V14M13.5 12V14" stroke="#666" stroke-width="1"/>
</svg>

</body></html>
